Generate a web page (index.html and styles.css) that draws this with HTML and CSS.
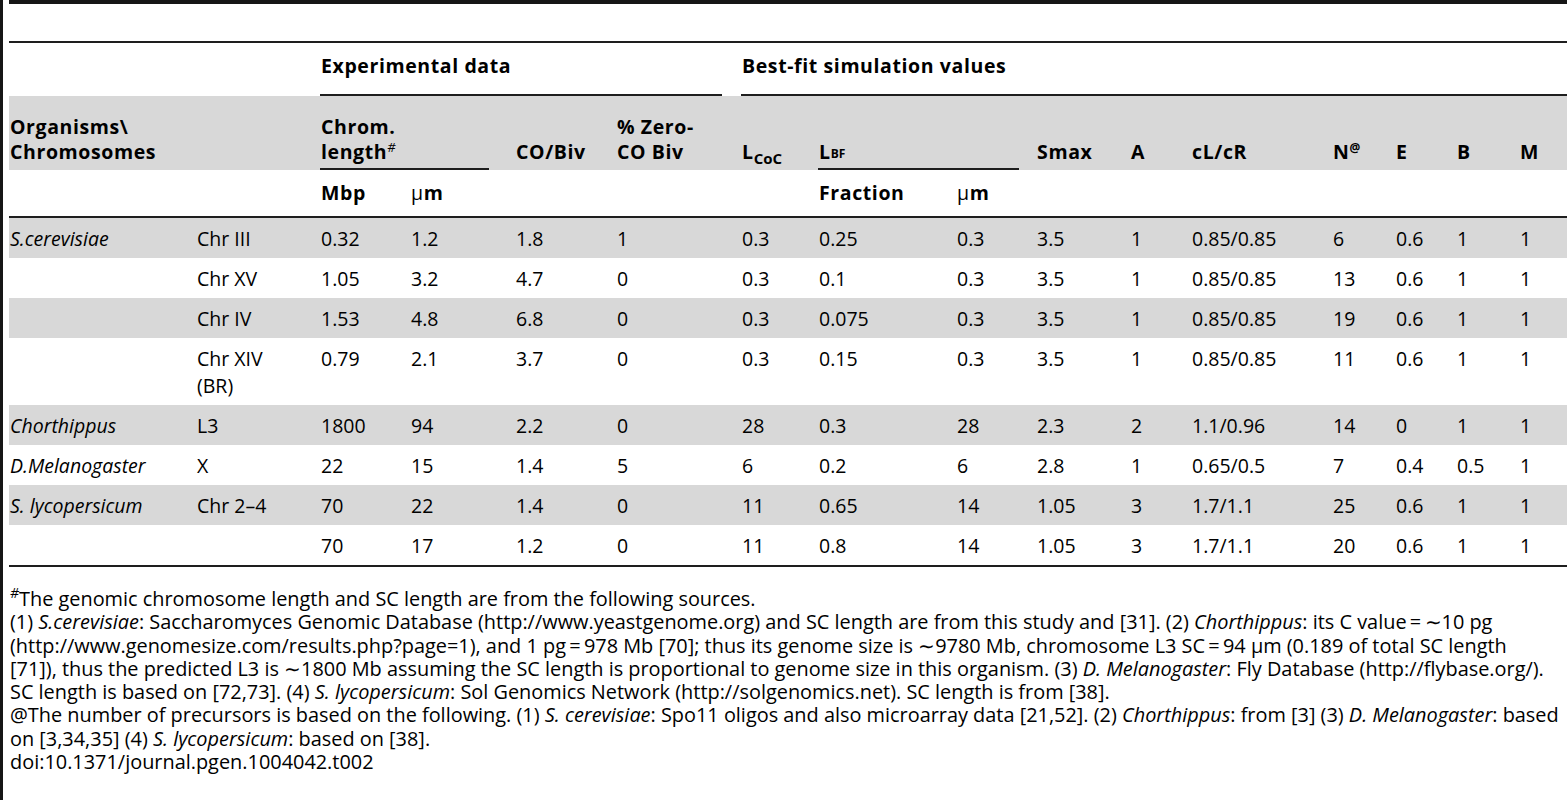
FILE: index.html
```html
<!DOCTYPE html>
<html>
<head>
  <title>Table 2. Parameters of the best-fit simulations</title>
  <link rel="stylesheet" href="styles.css">
</head>
<body>
  <div class="page">
    <div class="sheet">
      <table class="data">
        <colgroup>
          <col class="c1"><col class="c2"><col class="c3"><col class="c4">
          <col class="c5"><col class="c6"><col class="c7"><col class="c8">
          <col class="c9"><col class="c10"><col class="c11"><col class="c12">
          <col class="c13"><col class="c14"><col class="c15"><col class="c16">
        </colgroup>
        <thead>
          <tr class="groups">
            <th colspan="2"></th>
            <th colspan="4" class="ruled rule-exp">Experimental data</th>
            <th colspan="10" class="ruled rule-fit">Best-fit simulation values</th>
          </tr>
          <tr class="names">
            <th colspan="2">Organisms\<br>Chromosomes</th>
            <th colspan="2" class="ruled rule-len">Chrom.<br>length<sup class="mark">#</sup></th>
            <th>CO/Biv</th>
            <th>% Zero-<br>CO Biv</th>
            <th>L<sub class="coc">CoC</sub></th>
            <th colspan="2" class="ruled rule-bf">L<sub class="bf">BF</sub></th>
            <th>Smax</th>
            <th>A</th>
            <th>cL/cR</th>
            <th>N<sup class="at">@</sup></th>
            <th>E</th>
            <th>B</th>
            <th>M</th>
          </tr>
          <tr class="units">
            <th colspan="2"></th>
            <th>Mbp</th>
            <th><span class="mu">µ</span>m</th>
            <th></th>
            <th></th>
            <th></th>
            <th>Fraction</th>
            <th><span class="mu">µ</span>m</th>
            <th colspan="7"></th>
          </tr>
        </thead>
        <tbody>
          <tr class="shade">
            <td><i>S.cerevisiae</i></td><td>Chr III</td><td>0.32</td><td>1.2</td><td>1.8</td><td>1</td><td>0.3</td><td>0.25</td><td>0.3</td><td>3.5</td><td>1</td><td>0.85/0.85</td><td>6</td><td>0.6</td><td>1</td><td>1</td>
          </tr>
          <tr>
            <td></td><td>Chr XV</td><td>1.05</td><td>3.2</td><td>4.7</td><td>0</td><td>0.3</td><td>0.1</td><td>0.3</td><td>3.5</td><td>1</td><td>0.85/0.85</td><td>13</td><td>0.6</td><td>1</td><td>1</td>
          </tr>
          <tr class="shade">
            <td></td><td>Chr IV</td><td>1.53</td><td>4.8</td><td>6.8</td><td>0</td><td>0.3</td><td>0.075</td><td>0.3</td><td>3.5</td><td>1</td><td>0.85/0.85</td><td>19</td><td>0.6</td><td>1</td><td>1</td>
          </tr>
          <tr>
            <td></td><td>Chr XIV<br>(BR)</td><td>0.79</td><td>2.1</td><td>3.7</td><td>0</td><td>0.3</td><td>0.15</td><td>0.3</td><td>3.5</td><td>1</td><td>0.85/0.85</td><td>11</td><td>0.6</td><td>1</td><td>1</td>
          </tr>
          <tr class="shade">
            <td><i>Chorthippus</i></td><td>L3</td><td>1800</td><td>94</td><td>2.2</td><td>0</td><td>28</td><td>0.3</td><td>28</td><td>2.3</td><td>2</td><td>1.1/0.96</td><td>14</td><td>0</td><td>1</td><td>1</td>
          </tr>
          <tr>
            <td><i>D.Melanogaster</i></td><td>X</td><td>22</td><td>15</td><td>1.4</td><td>5</td><td>6</td><td>0.2</td><td>6</td><td>2.8</td><td>1</td><td>0.65/0.5</td><td>7</td><td>0.4</td><td>0.5</td><td>1</td>
          </tr>
          <tr class="shade">
            <td><i>S. lycopersicum</i></td><td>Chr 2–4</td><td>70</td><td>22</td><td>1.4</td><td>0</td><td>11</td><td>0.65</td><td>14</td><td>1.05</td><td>3</td><td>1.7/1.1</td><td>25</td><td>0.6</td><td>1</td><td>1</td>
          </tr>
          <tr class="last">
            <td></td><td></td><td>70</td><td>17</td><td>1.2</td><td>0</td><td>11</td><td>0.8</td><td>14</td><td>1.05</td><td>3</td><td>1.7/1.1</td><td>20</td><td>0.6</td><td>1</td><td>1</td>
          </tr>
        </tbody>
      </table>

      <div class="notes">
        <p><sup class="mark">#</sup>The genomic chromosome length and SC length are from the following sources.</p>
        <p>(1) <i>S.cerevisiae</i>: Saccharomyces Genomic Database (http://www.yeastgenome.org) and SC length are from this study and [31]. (2) <i>Chorthippus</i>: its C value&thinsp;=&thinsp;∼10 pg<br>
        (http://www.genomesize.com/results.php?page=1), and 1 pg&thinsp;=&thinsp;978 Mb [70]; thus its genome size is ∼9780 Mb, chromosome L3 SC&thinsp;=&thinsp;94 µm (0.189 of total SC length<br>
        [71]), thus the predicted L3 is ∼1800 Mb assuming the SC length is proportional to genome size in this organism. (3) <i>D. Melanogaster</i>: Fly Database (http://flybase.org/).<br>
        SC length is based on [72,73]. (4) <i>S. lycopersicum</i>: Sol Genomics Network (http://solgenomics.net). SC length is from [38].</p>
        <p>@The number of precursors is based on the following. (1) <i>S. cerevisiae</i>: Spo11 oligos and also microarray data [21,52]. (2) <i>Chorthippus</i>: from [3] (3) <i>D. Melanogaster</i>: based<br>
        on [3,34,35] (4) <i>S. lycopersicum</i>: based on [38].</p>
        <p>doi:10.1371/journal.pgen.1004042.t002</p>
      </div>
    </div>
  </div>
</body>
</html>
```

FILE: styles.css
```css
html, body {
    margin: 0;
    padding: 0;
  }

  body {
    font-family: "Open Sans", "Noto Sans", sans-serif;
    color: #000;
    background-color: #fff;
    overflow: hidden;
  }

  .page {
    border-left: 3px solid #161616;
    padding-left: 6px;
    min-height: 100vh;
    box-sizing: border-box;
  }

  .sheet {
    border-top: 4px solid #161616;
  }

  /* table */

  .data {
    width: 1558px;
    table-layout: fixed;
    border-collapse: separate;
    border-spacing: 0;
    margin-top: 37px;
    font-size: 19.5px;
  }

  .data .c1 { width: 187px; }
  .data .c2 { width: 124px; }
  .data .c3 { width: 90px; }
  .data .c4 { width: 105px; }
  .data .c5 { width: 101px; }
  .data .c6 { width: 125px; }
  .data .c7 { width: 77px; }
  .data .c8 { width: 138px; }
  .data .c9 { width: 80px; }
  .data .c10 { width: 94px; }
  .data .c11 { width: 61px; }
  .data .c12 { width: 141px; }
  .data .c13 { width: 63px; }
  .data .c14 { width: 61px; }
  .data .c15 { width: 63px; }
  .data .c16 { width: 48px; }

  .data th,
  .data td {
    padding: 0 0 0 1px;
    text-align: left;
    white-space: nowrap;
  }

  .data th {
    font-weight: bold;
    letter-spacing: 0.6px;
    line-height: 25px;
  }

  .data sup,
  .data sub {
    line-height: 0;
  }

  .groups th {
    border-top: 2px solid #1e1e1e;
    padding-top: 10px;
    padding-bottom: 18px;
    vertical-align: top;
  }

  .names th {
    background-color: #d8d8d8;
    padding-top: 18px;
    padding-bottom: 6px;
    vertical-align: bottom;
  }

  .units th {
    padding-top: 10px;
    padding-bottom: 11px;
    border-bottom: 2px solid #1e1e1e;
  }

  /* partial rules under spanning headers */
  .ruled {
    background-image: linear-gradient(#1e1e1e, #1e1e1e);
    background-repeat: no-repeat;
    background-position: left bottom;
    background-size: 100% 2px;
  }

  .rule-exp { background-size: calc(100% - 19px) 2px; }
  .rule-len { background-size: calc(100% - 26px) 2px; }
  .rule-bf { background-size: calc(100% - 17px) 2px; }

  .mu {
    font-weight: normal;
  }

  .mark {
    font-weight: normal;
    font-style: italic;
    font-size: 13px;
    letter-spacing: 0;
  }

  .at {
    font-size: 12px;
    letter-spacing: 0;
  }

  .coc {
    font-size: 15px;
    letter-spacing: 0;
  }

  .bf {
    font-size: 12px;
    letter-spacing: 0;
    vertical-align: 1px;
  }

  .data td {
    line-height: 27px;
    padding-top: 7px;
    padding-bottom: 6px;
    vertical-align: top;
  }

  .data tr.shade td {
    background-color: #d8d8d8;
  }

  .data tr.last td {
    border-bottom: 2px solid #1e1e1e;
  }

  /* footnotes */

  .notes {
    margin-top: 20px;
    padding-left: 1px;
    font-size: 19.9px;
    line-height: 23.3px;
    white-space: nowrap;
  }

  .notes p {
    margin: 0;
  }

  .notes .mark {
    font-size: 14px;
    line-height: 0;
  }
```
